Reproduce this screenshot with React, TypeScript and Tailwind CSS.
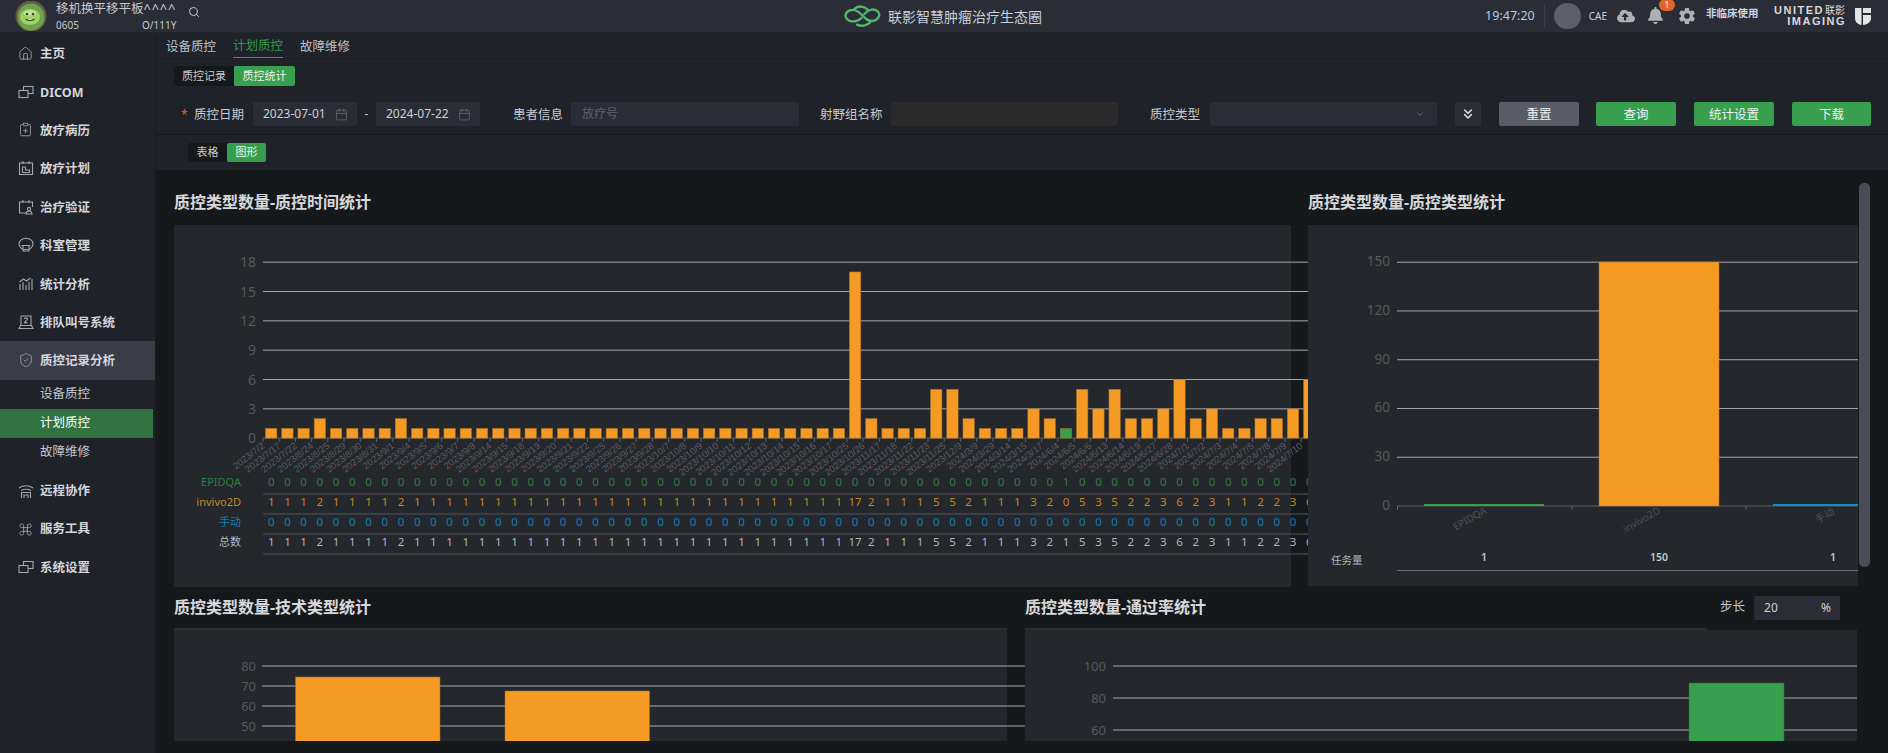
import React from "react";
import { Calendar, ChevronDown, ChevronsDown, Search, Home, ShieldCheck, Command, ClipboardPlus } from "lucide-react";
import { FaBell, FaCloudUploadAlt } from "react-icons/fa";
import { IoSettingsSharp } from "react-icons/io5";

const ORANGE = "#f59a23";
const GREEN = "#389f4f";
const BLUE = "#0a8fd6";

const Ico = ({ children }: { children: React.ReactNode }) => (
  <svg width="16" height="16" viewBox="0 0 16 16" fill="none" stroke="#a4a6ac" strokeWidth="1.1">{children}</svg>
);

const dicomIcon = (
  <Ico>
    <rect x="5.5" y="2.5" width="9.5" height="7" />
    <rect x="1" y="6.5" width="9" height="7" fill="#1f2229" />
  </Ico>
);

const icons: Record<string, React.ReactNode> = {
  home: <Home size={15} color="#a4a6ac" strokeWidth={1.4} />,
  dicom: dicomIcon,
  record: <ClipboardPlus size={15} color="#a4a6ac" strokeWidth={1.3} />,
  plan: (
    <Ico>
      <rect x="1.5" y="3" width="13" height="11.5" />
      <path d="M5 1v3M11 1v3M4.5 12.5V7h3v3h4v2.5z" />
    </Ico>
  ),
  verify: (
    <Ico>
      <path d="M9 14H1.5V3h13v5M5 1v3M11 1v3" />
      <circle cx="11" cy="10" r="1.6" />
      <path d="M8 15c.3-2 1.5-3 3-3s2.7 1 3 3z" />
    </Ico>
  ),
  dept: (
    <Ico>
      <ellipse cx="8" cy="7" rx="7" ry="5.8" />
      <path d="M3.5 8.5h9M5 9v5h6V9" />
    </Ico>
  ),
  stat: (
    <Ico>
      <path d="M2 14V8M5 14V6M8 14V9M11 14V6M14 14V3M1.5 6l4-3 3 2 4-3" />
    </Ico>
  ),
  queue: (
    <Ico>
      <path d="M3 11V2h10v9M1 14.5h14l-1.5-3h-11z" />
      <path d="M6.5 5c0-1.5 3-1.5 3 0 0 1.2-3 2.2-3 3.6h3" />
    </Ico>
  ),
  qc: <ShieldCheck size={16} color="#a4a6ac" strokeWidth={1.2} />,
  remote: (
    <Ico>
      <path d="M1 5c4-3 10-3 14 0M3 7.5c3-1.5 7-1.5 10 0M3.5 15V9.5h9V15M6 15v-3h4v3" />
    </Ico>
  ),
  tools: <Command size={15} color="#a4a6ac" strokeWidth={1.3} />,
  sys: dicomIcon,
};

const NavItem = ({ icon, label, active, late }: { icon: string; label: string; active?: boolean; late?: boolean }) => (
  <div className={`flex h-[38.4px] items-center pl-[18px] ${active ? "bg-[#3a3d47]" : ""}`}>
    <span className="flex w-[22px] shrink-0 items-center">{icons[icon]}</span>
    <span className={`text-[12.5px] font-bold text-[#d4d6dc] ${late ? "pt-[1px]" : "pt-[3px]"}`}>{label}</span>
  </div>
);

const SubItem = ({ label, active }: { label: string; active?: boolean }) => (
  <div className={`flex h-[29px] w-[153px] items-center pl-[40px] pt-[1px] text-[12.5px] ${active ? "bg-[#327241] text-white" : "text-[#c4c6cc]"}`}>
    {label}
  </div>
);

const Sidebar = () => (
  <aside className="flex w-[155px] shrink-0 flex-col bg-[#1f2229] pt-[1px]">
    <NavItem icon="home" label="主页" />
    <NavItem icon="dicom" label="DICOM" />
    <NavItem icon="record" label="放疗病历" />
    <NavItem icon="plan" label="放疗计划" />
    <NavItem icon="verify" label="治疗验证" />
    <NavItem icon="dept" label="科室管理" />
    <NavItem icon="stat" label="统计分析" />
    <NavItem icon="queue" label="排队叫号系统" />
    <NavItem icon="qc" label="质控记录分析" active />
    <SubItem label="设备质控" />
    <SubItem label="计划质控" active />
    <SubItem label="故障维修" />
    <div className="h-[5px]" />
    <NavItem icon="remote" label="远程协作" late />
    <NavItem icon="tools" label="服务工具" late />
    <NavItem icon="sys" label="系统设置" late />
  </aside>
);

const TopBar = () => (
  <header className="flex h-[33px] shrink-0 items-center border-b border-[#22252b] bg-[#2a2d35]">
    <svg width="32" height="30" viewBox="0 0 32 30" className="ml-[15px] shrink-0">
      <circle cx="16" cy="15" r="15.5" fill="#5f5c42" />
      <circle cx="16" cy="16" r="13.5" fill="#6fa24e" />
      <ellipse cx="15" cy="16" rx="10" ry="8" fill="#a0cf6c" />
      <ellipse cx="15" cy="12" rx="6" ry="2.5" fill="#c8e79a" />
      <circle cx="12" cy="13" r="1.3" fill="#2f4a25" />
      <circle cx="18" cy="13" r="1.3" fill="#2f4a25" />
      <path d="M10.5 18c2.5 2 6.5 2 9 0" stroke="#2f4a25" strokeWidth="1.2" fill="#e8f0d0" />
    </svg>
    <div className="ml-[9px] flex w-[122px] shrink-0 flex-col">
      <span className="whitespace-nowrap text-[12.5px] leading-[16px] text-[#c8cad0]">
        移机换平移平板<span className="text-[13px] tracking-[0.7px]">^^^^</span>
      </span>
      <div className="flex pt-[1px] text-[10px] leading-[14px] text-[#c8cad0]">
        <span className="w-[86px]">0605</span>
        <span>O/111Y</span>
      </div>
    </div>
    <Search size={12} color="#c8cad0" className="ml-[10px] mb-[9px] shrink-0" />
    <div className="ml-[642px] flex shrink-0 items-center">
      <svg width="40" height="24" viewBox="120 10 120 72" fill="none" stroke="#55b56f" strokeWidth="7" strokeLinecap="round">
        <path d="M178 52C170 62 150 66 138 58 125 48 130 30 150 28 165 26 175 38 185 48 195 60 215 68 228 52 238 38 225 24 208 27 198 29 192 34 187 40" />
        <path d="M158 24C170 14 188 16 198 28" />
        <path d="M205 64C195 76 178 78 165 72" />
      </svg>
      <span className="ml-[6px] whitespace-nowrap text-[14px] text-[#c6d0de]">联影智慧肿瘤治疗生态圈</span>
    </div>
    <div className="ml-auto flex items-center">
      <span className="text-[12.5px] text-[#b4cbe6]">19:47:20</span>
      <div className="ml-[9px] h-[22px] w-px bg-[#3b3e46]" />
      <div className="ml-[9px] h-[26px] w-[27px] rounded-full bg-[#5d5f6b]" />
      <span className="ml-[8px] text-[10px] text-[#c4cfdf]">CAE</span>
      <FaCloudUploadAlt size={18} color="#aeb0b6" className="ml-[10px]" />
      <div className="relative ml-[12px] h-[18px]">
        <FaBell size={17} color="#aeb0b6" />
        <span className="absolute -right-[11px] -top-[8px] flex h-[12px] w-[16px] items-center justify-center rounded-full bg-[#e0642a] text-[8.5px] text-white">1</span>
      </div>
      <IoSettingsSharp size={18} color="#aeb0b6" className="ml-[14px]" />
      <span className="ml-[10px] mb-[5px] w-[54px] whitespace-nowrap text-[10.5px] font-bold text-[#c6d4e8]">非临床使用</span>
      <div className="ml-[10px] flex w-[75px] flex-col items-end font-['Liberation_Sans','Noto_Sans_CJK_SC',sans-serif] text-[11px] font-bold leading-[11px] tracking-[1.5px] text-[#d8d8dc]">
        <span className="flex items-center whitespace-nowrap">UNITED<span className="ml-[1px] text-[10px] font-normal tracking-[0px]">联影</span></span>
        <span className="-mr-[1px]">IMAGING</span>
      </div>
      <svg width="16" height="17" viewBox="0 0 16 17" className="ml-[10px] mr-[17px] shrink-0">
        <path d="M0 0h6.5v17C2.5 16.5 0 14 0 10z" fill="#e4e4e6" />
        <path d="M8 0h8v5H8zM8 7h8v3c0 4-3 6.5-8 7z" fill="#e4e4e6" />
      </svg>
    </div>
  </header>
);

const Seg = ({ a, b, w1, w2, h, cls }: { a: string; b: string; w1: string; w2: string; h: string; cls: string }) => (
  <div className={`flex ${h} ${cls}`}>
    <div className={`flex ${w1} items-center justify-center rounded-l-[2px] bg-[#16191c] text-[11px] text-[#c8cad0]`}>{a}</div>
    <div className={`flex ${w2} items-center justify-center rounded-[2px] bg-[#389f4f] text-[11px] text-[#e8f4ea]`}>{b}</div>
  </div>
);

const DateBox = ({ v }: { v: string }) => (
  <div className="flex h-full w-[104px] shrink-0 items-center justify-between rounded-[2px] bg-[#2a2d35] pl-[10px] pr-[9px] text-[12px] text-[#ced0d6]">
    {v}
    <Calendar size={13} color="#6f7279" strokeWidth={1.3} />
  </div>
);

const FLabel = ({ children, cls }: { children: React.ReactNode; cls: string }) => (
  <span className={`shrink-0 whitespace-nowrap pt-[2px] text-[12.5px] text-[#c8cad0] ${cls}`}>{children}</span>
);

const Btn = ({ label, cls }: { label: string; cls: string }) => (
  <div className={`flex h-full items-center justify-center rounded-[2px] pt-[2px] text-[12.5px] text-[#eef0f2] ${cls}`}>{label}</div>
);

const FilterRow = () => (
  <div className="mt-[16px] flex h-[24px] items-center pl-[25px]">
    <span className="w-[13px] shrink-0 pt-[2px] text-[12px] text-[#e0642a]">*</span>
    <FLabel cls="w-[51px]">质控日期</FLabel>
    <div className="ml-[8px] flex h-full items-center">
      <DateBox v="2023-07-01" />
      <span className="w-[19px] text-center text-[12px] text-[#c8cad0]">-</span>
      <DateBox v="2024-07-22" />
    </div>
    <FLabel cls="ml-[33px] w-[50px]">患者信息</FLabel>
    <div className="ml-[8px] flex h-full w-[228px] items-center rounded-[2px] bg-[#2a2d35] pl-[11px] text-[12px] text-[#5f6269]">放疗号</div>
    <FLabel cls="ml-[21px] w-[63px]">射野组名称</FLabel>
    <div className="ml-[8px] h-full w-[227px] rounded-[2px] bg-[#2b2b2b]" />
    <FLabel cls="ml-[32px] w-[51px]">质控类型</FLabel>
    <div className="ml-[9px] flex h-full w-[227px] items-center justify-end rounded-[2px] bg-[#2a2d35] pr-[12px]">
      <ChevronDown size={10} color="#767981" />
    </div>
    <div className="ml-[18px] flex h-full w-[26px] items-center justify-center rounded-[2px] bg-[#2a2d35]">
      <ChevronsDown size={16} color="#d8dade" strokeWidth={2.4} />
    </div>
    <Btn label="重置" cls="ml-[18px] w-[80px] bg-[#5a5c68]" />
    <Btn label="查询" cls="ml-[17px] w-[80px] bg-[#389f4f]" />
    <Btn label="统计设置" cls="ml-[18px] w-[80px] bg-[#389f4f]" />
    <Btn label="下载" cls="ml-[18px] w-[79px] bg-[#389f4f]" />
  </div>
);

const Header = () => (
  <div className="shrink-0 border-l border-[#1a1c21] bg-[#1f2229]">
    <div className="flex h-[26px] items-end gap-[17px] border-b border-[#1a1c21] pl-[10px] text-[12.5px] text-[#bfc1c7]">
      <span className="flex h-full items-center pt-[3px]">设备质控</span>
      <span className="flex h-full items-center border-b border-[#389f4f] pt-[3px] text-[#2f9a4b]">计划质控</span>
      <span className="flex h-full items-center pt-[3px]">故障维修</span>
    </div>
    <Seg a="质控记录" b="质控统计" w1="w-[60px]" w2="w-[61px]" h="h-[20px]" cls="ml-[18px] mt-[7px]" />
    <FilterRow />
    <div className="mt-[8px] h-px bg-[#16191c]" />
    <div className="h-[35px] pt-[8px]">
      <Seg a="表格" b="图形" w1="w-[39px]" w2="w-[39px]" h="h-[19px]" cls="ml-[32px]" />
    </div>
  </div>
);

const dates = "2023/7/2,2023/7/17,2023/7/22,2023/8/24,2023/8/25,2023/8/29,2023/8/30,2023/8/31,2023/9/1,2023/9/4,2023/9/5,2023/9/6,2023/9/7,2023/9/8,2023/9/14,2023/9/15,2023/9/18,2023/9/19,2023/9/20,2023/9/21,2023/9/22,2023/9/25,2023/9/26,2023/9/27,2023/9/28,2023/10/7,2023/10/8,2023/10/9,2023/10/10,2023/10/11,2023/10/12,2023/10/13,2023/10/14,2023/10/15,2023/10/16,2023/10/17,2023/10/25,2023/10/26,2023/11/17,2023/11/18,2023/11/22,2023/11/23,2023/11/25,2023/12/9,2024/3/9,2024/3/29,2024/3/14,2024/3/15,2024/3/17,2024/6/4,2024/6/5,2024/6/6,2024/6/13,2024/6/14,2024/6/19,2024/6/27,2024/6/28,2024/7/1,2024/7/2,2024/7/3,2024/7/4,2024/7/5,2024/7/8,2024/7/9,2024/7/10".split(",");
const invivo = [1,1,1,2,1,1,1,1,2,1,1,1,1,1,1,1,1,1,1,1,1,1,1,1,1,1,1,1,1,1,1,1,1,1,1,1,17,2,1,1,1,5,5,2,1,1,1,3,2,0,5,3,5,2,2,3,6,2,3,1,1,2,2,3,6];
const LINE = "#a6a8ae";
const AXIS = "#5c5e64";
const BAR_EDGE = "#a3702c";

const TimeChart = () => {
  const y = (v: number) => 438.17 - v * 9.778;
  const step = 16.22;
  const cx = (i: number) => 271.2 + i * step;
  const rows = [
    { label: "EPIDQA", color: "#2f7d45", y: 486, vals: invivo.map((_, i) => (i === 49 ? 1 : 0)), line: 494 },
    { label: "invivo2D", color: "#c9851f", y: 506, vals: invivo, line: 514 },
    { label: "手动", color: "#0f7fb5", y: 526, vals: invivo.map(() => 0), line: 534 },
    { label: "总数", color: "#b4b6ba", y: 546, vals: invivo.map((v, i) => (i === 49 ? 1 : v)), line: 554 },
  ];
  return (
    <svg width="1134" height="362" viewBox="174 225 1134 362" className="block">
      {[0, 3, 6, 9, 12, 15, 18].map((v) => (
        <g key={v}>
          <text x="256" y={y(v) + 5} textAnchor="end" fontSize="14" fill="#56585e">{v}</text>
          {v > 0 && <line x1="263" x2="1308" y1={y(v)} y2={y(v)} stroke={LINE} />}
        </g>
      ))}
      <line x1="263" x2="1308" y1="438" y2="438" stroke={AXIS} />
      {invivo.map((v, i) => (
        <line key={i} x1={263 + i * step} x2={263 + i * step} y1="438" y2="442" stroke={AXIS} />
      ))}
      {invivo.map((v, i) => (
        <rect key={i} x={cx(i) - 5.7} y={y(v || 1)} width="11.4" height={(v || 1) * 9.778} fill={v ? ORANGE : GREEN} stroke={BAR_EDGE} strokeWidth="0.5" />
      ))}
      {dates.map((d, i) => (
        <text key={d} x={cx(i) - 6} y="447" textAnchor="end" fontSize="9.5" fontFamily="'Liberation Sans', sans-serif" fill="#5a5c61" transform={`rotate(-38 ${cx(i) - 6} 447)`}>{d}</text>
      ))}
      {rows.map((r) => (
        <g key={r.label}>
          <text x="241" y={r.y} textAnchor="end" fontSize="11" fill={r.color}>{r.label}</text>
          {r.vals.map((v, i) => (
            <text key={i} x={cx(i)} y={r.y} textAnchor="middle" fontSize="11.5" fill={r.color}>{v}</text>
          ))}
          <line x1="263" x2="1308" y1={r.line} y2={r.line} stroke="#55575c" />
        </g>
      ))}
    </svg>
  );
};

const TypeChart = () => {
  const y = (v: number) => 506 - v * 1.6253;
  return (
    <svg width="550" height="362" viewBox="1308 225 550 362" className="block">
      {[0, 30, 60, 90, 120, 150].map((v) => (
        <g key={v}>
          <text x="1390" y={y(v) + 4} textAnchor="end" fontSize="13.5" fill="#56585e">{v}</text>
          {v > 0 && <line x1="1397" x2="1858" y1={y(v)} y2={y(v)} stroke={LINE} />}
        </g>
      ))}
      <line x1="1397" x2="1858" y1="506" y2="506" stroke={AXIS} />
      {[1397.5, 1572, 1746].map((x) => (
        <line key={x} x1={x} x2={x} y1="506" y2="510" stroke={AXIS} />
      ))}
      <rect x="1424" y="504" width="120" height="2" fill={GREEN} />
      <rect x="1599" y="262" width="120" height="244" fill={ORANGE} stroke={BAR_EDGE} strokeWidth="0.5" />
      <rect x="1773" y="504" width="120" height="2" fill={BLUE} />
      <text x="1470" y="522" textAnchor="middle" fontSize="10" fill="#4e5055" transform="rotate(-30 1470 519)">EPIDQA</text>
      <text x="1642" y="523" textAnchor="middle" fontSize="10" fill="#4e5055" transform="rotate(-30 1642 520)">invivo2D</text>
      <text x="1825" y="519" textAnchor="middle" fontSize="10" fill="#4e5055" transform="rotate(-30 1825 516)">手动</text>
      <text x="1331" y="564" fontSize="10.5" fill="#b4b6ba">任务量</text>
      {[["1", 1484], ["150", 1659], ["1", 1833]].map(([t, x]) => (
        <text key={x} x={x} y="561" textAnchor="middle" fontSize="10.5" fontWeight="600" fill="#c4c6ca">{t}</text>
      ))}
      <line x1="1397" x2="1858" y1="570.5" y2="570.5" stroke="#6a6c72" />
    </svg>
  );
};

const TechChart = () => (
  <svg width="851" height="113" viewBox="174 628 851 113" className="block">
    {[[80, 666], [70, 686], [60, 706], [50, 726], [40, 746]].map(([v, y]) => (
      <g key={v}>
        <text x="256" y={y + 4.5} textAnchor="end" fontSize="13" fill="#56585e">{v}</text>
        <line x1="262" x2="1025" y1={y} y2={y} stroke={LINE} />
      </g>
    ))}
    <rect x="295.5" y="677" width="144.5" height="70" fill={ORANGE} stroke={BAR_EDGE} strokeWidth="0.5" />
    <rect x="505" y="691" width="144.5" height="56" fill={ORANGE} stroke={BAR_EDGE} strokeWidth="0.5" />
  </svg>
);

const RateChart = () => (
  <svg width="832" height="111" viewBox="1025 630 832 111" className="block">
    {[[100, 666], [80, 698], [60, 730]].map(([v, y]) => (
      <g key={v}>
        <text x="1106" y={y + 4.5} textAnchor="end" fontSize="13" fill="#56585e">{v}</text>
        <line x1="1113" x2="1857" y1={y} y2={y} stroke={LINE} />
      </g>
    ))}
    <rect x="1689" y="683" width="95" height="60" fill={GREEN} stroke="#2c6b3c" strokeWidth="0.5" />
  </svg>
);

const Title = ({ children }: { children: React.ReactNode }) => (
  <h2 className="whitespace-nowrap text-[16px] font-bold text-[#d6d8dc]">{children}</h2>
);

const Content = () => (
  <div className="relative flex min-h-0 flex-1 flex-col bg-[#16191c] pl-[19px]">
    <div className="flex h-[55px] shrink-0 items-center pt-[8px]">
      <div className="w-[1134px]"><Title>质控类型数量-质控时间统计</Title></div>
      <Title>质控类型数量-质控类型统计</Title>
    </div>
    <div className="flex h-[362px] shrink-0">
      <div className="w-[1134px] shrink-0">
        <div className="h-full w-[1117px] bg-[#24272c]"><TimeChart /></div>
      </div>
      <div className="h-[361px] w-[550px] bg-[#24272c]"><TypeChart /></div>
    </div>
    <div className="flex h-[41px] shrink-0 items-center">
      <div className="w-[851px] -mt-[2px]"><Title>质控类型数量-技术类型统计</Title></div>
      <div className="w-[695px] -mt-[2px]"><Title>质控类型数量-通过率统计</Title></div>
      <span className="text-[12.5px] text-[#c8cad0]">步长</span>
      <div className="ml-[9px] flex h-[24px] w-[86px] items-center justify-between rounded-[2px] bg-[#2a2d35] pl-[10px] pr-[9px] text-[12px] text-[#ced0d6]">
        <span>20</span><span>%</span>
      </div>
    </div>
    <div className="flex h-[113px] shrink-0">
      <div className="w-[851px] shrink-0">
        <div className="h-full w-[833px] border-t-2 border-[#2a2d32] bg-[#24272c]">
          <div className="-mt-[2px]"><TechChart /></div>
        </div>
      </div>
      <div className="w-[832px]">
        <div className="h-[2px] w-[682px] bg-[#2a2d32]" />
        <div className="h-[111px] bg-[#24272c]"><RateChart /></div>
      </div>
    </div>
    <div className="absolute right-[18px] top-[13px] h-[384px] w-[11px] rounded-[5px] bg-[#4a4d58]" />
  </div>
);

export default function App() {
  return (
    <div className="flex h-[753px] w-[1888px] flex-col overflow-hidden bg-[#16191c] font-['Noto_Sans','Noto_Sans_CJK_SC',sans-serif]">
      <TopBar />
      <div className="flex min-h-0 flex-1">
        <Sidebar />
        <main className="flex min-w-0 flex-1 flex-col">
          <Header />
          <Content />
        </main>
      </div>
    </div>
  );
}
